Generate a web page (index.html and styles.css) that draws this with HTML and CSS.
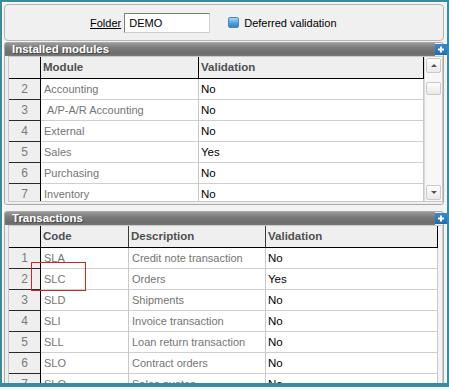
FILE: index.html
```html
<!DOCTYPE html>
<html>
<head>
<meta charset="utf-8">
<link rel="stylesheet" href="styles.css">
</head>
<body>
<div class="frame">
  <div class="topbox">
    <span class="lbl">Folder</span>
    <div class="input">DEMO</div>
    <span class="chk"></span>
    <span class="chklbl">Deferred validation</span>
  </div>

  <section class="sect s1">
    <div class="bar"><span>Installed modules</span></div>
    <span class="plus"><svg width="12" height="11" viewBox="0 0 12 11"><path d="M6 2.5v6M3 5.5h6" stroke="#fff" stroke-width="2"/></svg></span>
    <div class="grid g1">
      <div class="table">
        <div class="row head">
          <div class="c num"></div>
          <div class="c">Module</div>
          <div class="c last">Validation</div>
        </div>
        <div class="row"><div class="c num">2</div><div class="c ro">Accounting</div><div class="c val">No</div></div>
        <div class="row"><div class="c num">3</div><div class="c ro">&nbsp;A/P-A/R Accounting</div><div class="c val">No</div></div>
        <div class="row"><div class="c num">4</div><div class="c ro">External</div><div class="c val">No</div></div>
        <div class="row"><div class="c num">5</div><div class="c ro">Sales</div><div class="c val">Yes</div></div>
        <div class="row"><div class="c num">6</div><div class="c ro">Purchasing</div><div class="c val">No</div></div>
        <div class="row"><div class="c num">7</div><div class="c ro">Inventory</div><div class="c val">No</div></div>
      </div>
      <div class="vscroll">
        <div class="sbtn up"><span class="tri-up"></span></div>
        <div class="thumb"></div>
        <div class="sbtn down"><span class="tri-down"></span></div>
      </div>
    </div>
  </section>

  <section class="sect s2">
    <div class="bar"><span>Transactions</span></div>
    <span class="plus"><svg width="12" height="11" viewBox="0 0 12 11"><path d="M6 2.5v6M3 5.5h6" stroke="#fff" stroke-width="2"/></svg></span>
    <div class="grid g2">
      <div class="table">
        <div class="row head">
          <div class="c num"></div>
          <div class="c">Code</div>
          <div class="c">Description</div>
          <div class="c last">Validation</div>
        </div>
        <div class="row"><div class="c num">1</div><div class="c ro">SLA</div><div class="c ro">Credit note transaction</div><div class="c val">No</div></div>
        <div class="row"><div class="c num">2</div><div class="c ro">SLC</div><div class="c ro">Orders</div><div class="c val">Yes</div></div>
        <div class="row"><div class="c num">3</div><div class="c ro">SLD</div><div class="c ro">Shipments</div><div class="c val">No</div></div>
        <div class="row"><div class="c num">4</div><div class="c ro">SLI</div><div class="c ro">Invoice transaction</div><div class="c val">No</div></div>
        <div class="row"><div class="c num">5</div><div class="c ro">SLL</div><div class="c ro">Loan return transaction</div><div class="c val">No</div></div>
        <div class="row"><div class="c num">6</div><div class="c ro">SLO</div><div class="c ro">Contract orders</div><div class="c val">No</div></div>
        <div class="row"><div class="c num">7</div><div class="c ro">SLQ</div><div class="c ro">Sales quotes</div><div class="c val">No</div></div>
      </div>
    </div>
  </section>

  <div class="mark"></div>
</div>
</body>
</html>
```

FILE: styles.css
```css
* { box-sizing: border-box; }
html, body {
  margin: 0;
  padding: 0;
  background: #f7f7f7;
}
body {
  width: 449px;
  height: 390px;
  overflow: hidden;
  font-family: "Liberation Sans", Arial, sans-serif;
  font-size: 11px;
  color: #000;
}
.frame {
  position: relative;
  width: 449px;
  height: 387px;
  border-style: solid;
  border-color: #3a8aa1;
  border-width: 2px 2px 4px 2px;
  background: #f3f3f3;
  box-shadow: inset 1px 1px 0 #ffffff;
  padding: 2px 3px 0 2px;
  overflow: hidden;
  display: flex;
  flex-direction: column;
}

/* top group box */
.topbox {
  flex: none;
  height: 37px;
  border: 1px solid #b4b4b4;
  border-radius: 4px;
  background: #f0f0f0;
  display: flex;
  align-items: center;
  padding-left: 85px;
}
.lbl {
  text-decoration: underline;
  margin-right: 3px;
}
.input {
  width: 86px;
  height: 20px;
  background: #fff;
  border: 1px solid;
  border-color: #7c7c7c #cfcfcf #cfcfcf #7c7c7c;
  line-height: 18px;
  padding-left: 4px;
  margin-right: 18px;
}
.chk {
  width: 11px;
  height: 11px;
  border: 1px solid #4a86b2;
  border-radius: 2px;
  background: linear-gradient(#a6dcf6, #4ba3dc 55%, #2f86c6);
  margin-right: 5px;
}

/* sections */
.sect {
  position: relative;
  flex: none;
  border: 1px solid #a9a9a9;
  border-radius: 3px;
  background: #efefef;
  padding-bottom: 2px;
}
.s1 { margin-top: 1px; }
.s2 { margin-top: 6px; }
.bar {
  height: 13px;
  margin-right: 8px;
  background: linear-gradient(#9a9a9a, #7c7c7c 35%, #6c6c6c 80%, #787878);
  color: #fff;
  font-weight: bold;
  font-size: 11.5px;
  line-height: 13px;
  padding-left: 7px;
  text-shadow: 1px 1px 0 #4a4a4a;
}
.plus {
  position: absolute;
  left: 430px;
  top: 1px;
  width: 12px;
  height: 11px;
  background: linear-gradient(#3b8ad0, #1f6cb5);
  display: block;
}
.plus svg { display: block; }

/* grids */
.grid {
  margin-left: 3px;
  border: 1px solid #c9c9c9;
  background: #f4f4f4;
  display: flex;
  overflow: hidden;
}
.g1 { height: 146px; }
.g2 { height: 170px; }
.table { flex: none; }
.g1 .table { width: 415px; }
.g2 .table { width: 429px; }
.row {
  display: grid;
  height: 21px;
  background: #fff;
}
.g1 .row { grid-template-columns: 32px 158px 225px; }
.g2 .row { grid-template-columns: 32px 88px 137px 172px; }
.c {
  border-right: 1px solid #c8c8c8;
  border-bottom: 1px solid #cfcfcf;
  line-height: 20px;
  padding-left: 2px;
  white-space: nowrap;
  overflow: hidden;
}
.c.num {
  background: #efefef;
  border-right-color: #000;
  border-bottom-color: #2a2a2a;
  color: #7a7a7a;
  text-align: center;
  padding-left: 0;
  font-size: 12px;
}
.ro { color: #757575; padding-left: 3px; }
.val { padding-left: 2px; font-size: 11.5px; }
.row.head {
  height: 22px;
  background: #efefef;
}
.row.head .c {
  border-bottom-color: #000;
  border-right-color: #000;
  line-height: 21px;
  font-weight: bold;
  font-size: 11.5px;
  color: #505050;
  padding-left: 2px;
}
.g2 .row.head .c { border-right-color: #3a3a3a; }
.g2 .row.head .c.num { border-right-color: #000; }
.row.head .c.last { border-right-color: #000; }

/* scrollbar */
.vscroll {
  width: 18px;
  border-left: 1px solid #dadada;
  background: #f7f7f7;
  padding: 1px;
  display: flex;
  flex-direction: column;
  height: 144px;
}
.sbtn, .thumb {
  width: 15px;
  background: linear-gradient(#fdfdfd, #e9e9e9);
  border: 1px solid #c9c9c9;
  border-radius: 2px;
  display: flex;
  align-items: center;
  justify-content: center;
}
.sbtn { height: 15px; }
.thumb { height: 13px; margin-top: 9px; }
.down { margin-top: auto; }
.tri-up {
  width: 0; height: 0;
  border-left: 3px solid transparent;
  border-right: 3px solid transparent;
  border-bottom: 3px solid #555;
}
.tri-down {
  width: 0; height: 0;
  border-left: 3px solid transparent;
  border-right: 3px solid transparent;
  border-top: 3px solid #555;
}

/* red annotation rectangle */
.mark {
  position: absolute;
  left: 29px;
  top: 260px;
  width: 55px;
  height: 29px;
  border: 1px solid #d02525;
}
```
